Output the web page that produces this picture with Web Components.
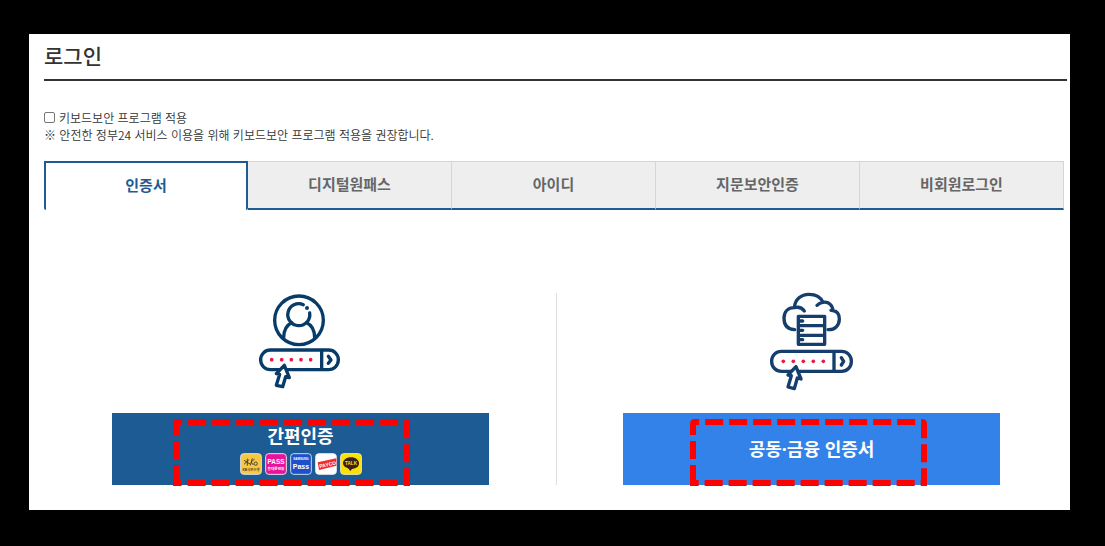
<!DOCTYPE html>
<html lang="ko">
<head>
<meta charset="utf-8">
<title>로그인</title>
<style>
  body { margin: 0; background: #000; color: #333; font-family: "Noto Sans CJK KR", "Noto Sans", sans-serif; }
</style>
</head>
<body>
<login-page></login-page>

<template id="login-page">
  <style>
    :host { display: block; padding: 34px 35px 36px 29px; }
    main { background: #fff; padding: 0 3px 25px 15px; }
    h1 { margin: 0 0 28px; padding-bottom: 3px; border-bottom: 2px solid #333; font-size: 21px; line-height: 42px; font-weight: 500; }
    .options { display: grid; grid-template-columns: 1fr 1fr; margin: 83px 0 0 1px; }
    auth-option + auth-option { border-left: 1px solid #ddd; padding-left: 66px; }
  </style>
  <main>
    <h1>로그인</h1>
    <security-note></security-note>
    <login-tabs></login-tabs>
    <div class="options">
      <auth-option style="--fill:#1d5b94;--mark-left:61px">
        <user-icon slot="icon"></user-icon>
        간편인증
        <provider-list slot="extra"></provider-list>
      </auth-option>
      <auth-option style="--fill:#3282e9;--mark-left:67px">
        <cloud-icon slot="icon"></cloud-icon>
        공동·금융 인증서
      </auth-option>
    </div>
  </main>
</template>

<template id="security-note">
  <style>
    :host { display: block; color: #333; font-size: 12px; line-height: 17px; font-weight: 350; }
    label { display: flex; align-items: center; gap: 4px; }
    input { appearance: none; box-sizing: border-box; width: 11px; height: 11px; margin: 0; border: 1px solid #767676; border-radius: 2px; background: #fff; }
    input:checked { background: #1d5b94; }
    p { margin: 0; }
  </style>
  <label><input type="checkbox">키보드보안 프로그램 적용</label>
  <p>※ 안전한 정부24 서비스 이용을 위해 키보드보안 프로그램 적용을 권장합니다.</p>
</template>

<template id="login-tabs">
  <style>
    :host { display: block; margin: 18px 3px 0 0; }
    div { display: grid; grid-template-columns: repeat(5, 1fr); }
    button { box-sizing: border-box; height: 49px; margin: 0; padding: 0 0 2px; border: 1px solid #d5d5d5; border-width: 1px 1px 2px 0; border-bottom-color: #1d5b94; background: #eee; color: #666; font: inherit; font-size: 15px; font-weight: 700; line-height: 20px; }
    button[aria-selected="true"] { padding-bottom: 4px; border: 2px solid #1d5b94; border-bottom: 0; border-radius: 0 0 2px 2px; background: #fff; color: #1d5b94; }
  </style>
  <div role="tablist">
    <button role="tab" aria-selected="true">인증서</button>
    <button role="tab" aria-selected="false">디지털원패스</button>
    <button role="tab" aria-selected="false">아이디</button>
    <button role="tab" aria-selected="false">지문보안인증</button>
    <button role="tab" aria-selected="false">비회원로그인</button>
  </div>
</template>

<template id="auth-option">
  <style>
    :host { display: flex; flex-direction: column; align-items: center; padding: 0 67px; }
    ::slotted([slot="icon"]) { margin: -8px 0 18px; }
    button { position: relative; display: flex; flex-direction: column; align-items: center; justify-content: center; gap: 5px; width: 100%; height: 72px; margin: 0; padding: 0; border: 0; background: var(--fill); color: #fff; font: inherit; font-family: "Noto Sans", "Noto Sans CJK KR", sans-serif; font-size: 18px; font-weight: 700; line-height: 24px; }
    .mark { position: absolute; top: 6px; left: var(--mark-left); pointer-events: none; }
  </style>
  <slot name="icon"></slot>
  <button>
    <span><slot></slot></span>
    <slot name="extra"></slot>
    <svg class="mark" width="237" height="67" viewBox="0 0 237 67" aria-hidden="true">
      <path d="M3 64V5Q3 3 5 3H232Q234 3 234 5V64Z" fill="none" stroke="#f00" stroke-width="6" stroke-dasharray="18 6"/>
    </svg>
  </button>
</template>

<template id="user-icon">
  <style>:host { display: block; } svg { display: block; }</style>
  <svg width="100" height="110" viewBox="3 0 300 330" fill="none" stroke="#073b68" stroke-width="10" stroke-linecap="round" stroke-linejoin="round" aria-hidden="true">
    <circle cx="147" cy="106" r="73"/>
    <path d="M160 59A33 33 0 1 0 179 84"/>
    <path d="M101 158C101 134 110 120 125 113M170 113C185 120 194 134 194 158"/>
    <circle cx="171" cy="69" r="6" fill="#073b68" stroke="none"/>
    <rect x="32" y="195" width="233" height="59" rx="29"/>
    <path d="M215 196V253"/>
    <path d="M235 214L243 225L235 235"/>
    <path d="M103 241L79 266L89 268L79 301L98 305L107 275L118 278Z" fill="#fff"/>
    <g fill="#ed1746" stroke="none"><circle cx="65" cy="224" r="5.5"/><circle cx="95" cy="224" r="5.5"/><circle cx="124" cy="224" r="5.5"/><circle cx="153" cy="224" r="5.5"/><circle cx="182" cy="224" r="5.5"/></g>
  </svg>
</template>

<template id="cloud-icon">
  <style>:host { display: block; } svg { display: block; }</style>
  <svg width="100" height="110" viewBox="7 0 300 330" fill="none" stroke="#153e6c" stroke-width="10" stroke-linecap="round" stroke-linejoin="round" aria-hidden="true">
    <path d="M105 134C82 133 73 119 73 100C73 81 84 68 104 68C106 42 125 28 148 28C169 28 184 38 190 52C207 48 219 62 220 77C233 79 239 90 239 102C239 122 225 135 205 134M104 68Q123 63 134 78M172 61Q180 53 190 52M220 77L214 76"/>
    <path d="M116 94H195V178H116ZM116 122H195M116 151H195M118 108H129M118 136H129M118 164H129"/>
    <rect x="36" y="199" width="239" height="60" rx="29"/>
    <path d="M223 200V258"/>
    <path d="M245 218L252 229L245 240"/>
    <path d="M109 245L85 270L95 272L85 306L104 311L113 279L124 282Z" fill="#fff"/>
    <g fill="#ed1746" stroke="none"><circle cx="71" cy="229" r="5.5"/><circle cx="101" cy="229" r="5.5"/><circle cx="131" cy="229" r="5.5"/><circle cx="161" cy="229" r="5.5"/><circle cx="191" cy="229" r="5.5"/></g>
  </svg>
</template>

<template id="provider-list">
  <style>
    :host { display: flex; gap: 3px; }
    svg { display: block; }
    text { font-family: "Liberation Sans", "Noto Sans CJK KR", sans-serif; font-weight: 700; text-anchor: middle; }
  </style>
  <svg width="22" height="22" viewBox="0 0 66 66">
    <rect x="2" y="2" width="62" height="62" rx="9" fill="#fac83e" stroke="#dde3e8" stroke-width="3"/>
    <path d="M12 22L30 33M12 34L27 20M22 17V38M37 16L31 37M44 18L33 27L40 36" fill="none" stroke="#4a4030" stroke-width="3"/>
    <circle cx="47" cy="32" r="5" fill="none" stroke="#4a4030" stroke-width="3"/>
    <text x="33" y="55" font-size="10" fill="#4a4030">KB국민은행</text>
  </svg>
  <svg width="22" height="22" viewBox="0 0 66 66">
    <rect x="2" y="2" width="62" height="62" rx="9" fill="#e6139b" stroke="#f5dceb" stroke-width="3"/>
    <text x="33" y="32" font-size="19" fill="#fff">PASS</text>
    <text x="33" y="52" font-size="11" fill="#fff">휴대폰인증</text>
  </svg>
  <svg width="22" height="22" viewBox="0 0 66 66">
    <rect x="2" y="2" width="62" height="62" rx="9" fill="#1f50cc" stroke="#c9d8f0" stroke-width="3"/>
    <text x="33" y="21" font-size="9" fill="#fff">SAMSUNG</text>
    <text x="33" y="47" font-size="21" fill="#fff">Pass</text>
  </svg>
  <svg width="22" height="22" viewBox="0 0 66 66">
    <rect x="2" y="2" width="62" height="62" rx="9" fill="#fff" stroke="#e5e9ee" stroke-width="3"/>
    <path d="M8 28L64 16V38L12 51Z" fill="#f22b2b"/>
    <text x="38" y="40" font-size="15" fill="#fff" transform="rotate(-12 38 36)">PAYCO</text>
  </svg>
  <svg width="22" height="22" viewBox="0 0 66 66">
    <rect x="2" y="2" width="62" height="62" rx="9" fill="#fae100" stroke="#f2ecb0" stroke-width="3"/>
    <path d="M33 13C19 13 9 21 9 31C9 38 14 43 24 46L31 54L36 48C49 47 57 41 57 31C57 21 47 13 33 13Z" fill="#3a2020"/>
    <text x="33" y="36" font-size="14" fill="#fae100">TALK</text>
  </svg>
</template>

<script>
  const names = ["security-note", "login-tabs", "user-icon", "cloud-icon", "provider-list", "auth-option", "login-page"];
  for (const name of names) {
    customElements.define(name, class extends HTMLElement {
      constructor() {
        super();
        this.attachShadow({ mode: "open" }).append(document.getElementById(name).content.cloneNode(true));
      }
    });
  }
</script>
</body>
</html>
